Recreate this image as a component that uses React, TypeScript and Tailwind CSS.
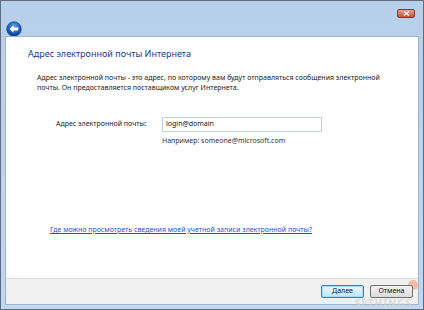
import React from 'react';

const font = { fontFamily: '"Noto Sans", "Open Sans", sans-serif' };

function BackButton() {
  return (
    <svg width="16" height="16" viewBox="0 0 16 16">
      <defs>
        <radialGradient id="bb" cx="50%" cy="35%" r="65%">
          <stop offset="0%" stopColor="#6fa6e8" />
          <stop offset="60%" stopColor="#1d5fc4" />
          <stop offset="100%" stopColor="#0b3680" />
        </radialGradient>
      </defs>
      <circle cx="8" cy="8" r="7.3" fill="url(#bb)" stroke="#2a4f86" strokeWidth="0.7" />
      <path d="M3.5 8 L7.5 4.3 L7.5 6.6 L12.3 6.6 L12.3 9.4 L7.5 9.4 L7.5 11.7 Z" fill="#fff" />
    </svg>
  );
}

function CloseButton() {
  return (
    <div className="flex h-[9px] w-[18px] items-center justify-center rounded-[2px] border border-[#7a3a32] bg-gradient-to-b from-[#e6a08e] to-[#c5503a]">
      <svg width="7" height="5" viewBox="0 0 7 5">
        <path d="M1 0.5 L6 4.5 M6 0.5 L1 4.5" stroke="#fff" strokeWidth="1.3" />
      </svg>
    </div>
  );
}

export default function App() {
  return (
    <div className="h-[310px] w-[424px] overflow-hidden bg-[#5d6b7c] p-px" style={font}>
      <div className="flex h-full flex-col bg-gradient-to-b from-[#b7cfea] to-[#c3d7ee] px-1 pb-1">
        {/* title bar */}
        <div className="flex h-[35px] shrink-0 flex-col">
          <div className="flex justify-end pr-[4px] pt-[8px]">
            <CloseButton />
          </div>
          <div className="pl-[1px] pt-[3px]">
            <BackButton />
          </div>
        </div>

        {/* content */}
        <div className="flex flex-1 flex-col border border-[#9db4d0] bg-white">
          <div className="flex-1 pl-[22px] pt-[11px]">
            <h1 className="text-[9px] leading-[12px] text-[#1e3a8f]">
              Адрес электронной почты Интернета
            </h1>
            <p className="ml-[9px] mt-[13px] w-[360px] text-[7px] leading-[10px] text-[#222]">
              Адрес электронной почты - это адрес, по которому вам будут отправляться сообщения электронной
              почты. Он предоставляется поставщиком услуг Интернета.
            </p>

            <div className="mt-[24px] flex items-center">
              <span className="ml-[28px] w-[106px] text-[7px] text-[#222]">Адрес электронной почты:</span>
              <div className="flex h-[15px] w-[160px] items-center border border-[#c5cdd6] pl-[3px] text-[7px] text-[#111]">
                login@domain
              </div>
            </div>
            <div className="ml-[134px] mt-[4px] text-[7px] leading-[10px] text-[#333]">
              Например: someone@microsoft.com
            </div>

            <a className="ml-[22px] mt-[79px] block text-[7px] leading-[10px] text-[#1a55c8] underline">
              Где можно просмотреть сведения моей учетной записи электронной почты?
            </a>
          </div>

          {/* footer */}
          <div className="relative flex h-[26px] shrink-0 items-center justify-end gap-[6px] border-t border-[#dfdfdf] bg-[#f0f0f0] pr-[5px]">
            <button className="relative z-10 flex h-[13px] w-[43px] items-center justify-center rounded-[2px] border border-[#3c7fb1] bg-gradient-to-b from-[#eaf6fd] to-[#bee6fd] text-[7px] text-[#111] shadow-[inset_0_0_0_1px_#a6dcfb]">
              Далее
            </button>
            <button className="relative z-10 flex h-[13px] w-[43px] items-center justify-center rounded-[2px] border border-[#707070] bg-gradient-to-b from-[#f2f2f2] to-[#dcdcdc] text-[7px] text-[#111]">
              Отмена
            </button>
            <span className="pointer-events-none absolute right-[6px] top-[19px] text-[10px] font-bold leading-none tracking-[1px] text-[#d6d6d6]/80">
              SETHINGS
            </span>
            <span className="absolute right-[0px] top-[1px] h-[10px] w-[10px] rounded-full bg-[#f2a48a]/70" />
          </div>
        </div>
      </div>
    </div>
  );
}
